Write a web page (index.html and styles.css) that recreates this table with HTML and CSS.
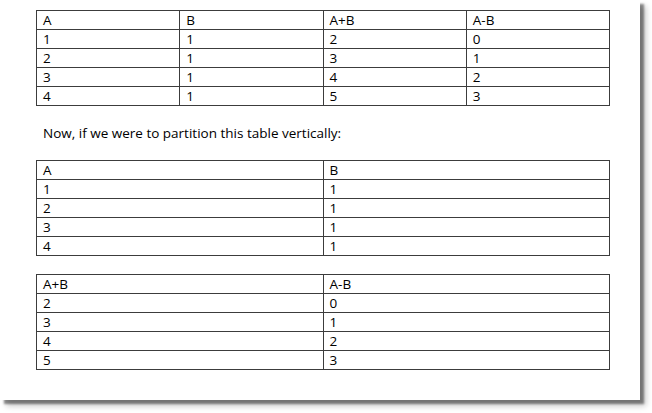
FILE: index.html
```html
<!DOCTYPE html>
<html>
<head>
<meta charset="utf-8">
<link rel="stylesheet" href="styles.css">
</head>
<body>
<div class="page">
  <table class="grid four">
    <tr><td>A</td><td>B</td><td>A+B</td><td>A-B</td></tr>
    <tr><td>1</td><td>1</td><td>2</td><td>0</td></tr>
    <tr><td>2</td><td>1</td><td>3</td><td>1</td></tr>
    <tr><td>3</td><td>1</td><td>4</td><td>2</td></tr>
    <tr><td>4</td><td>1</td><td>5</td><td>3</td></tr>
  </table>
  <p class="para">Now, if we were to partition this table vertically:</p>
  <table class="grid two">
    <tr><td>A</td><td>B</td></tr>
    <tr><td>1</td><td>1</td></tr>
    <tr><td>2</td><td>1</td></tr>
    <tr><td>3</td><td>1</td></tr>
    <tr><td>4</td><td>1</td></tr>
  </table>
  <table class="grid two second">
    <tr><td>A+B</td><td>A-B</td></tr>
    <tr><td>2</td><td>0</td></tr>
    <tr><td>3</td><td>1</td></tr>
    <tr><td>4</td><td>2</td></tr>
    <tr><td>5</td><td>3</td></tr>
  </table>
</div>
</body>
</html>
```
FILE: styles.css
```css
html, body {
  margin: 0;
  padding: 0;
  background: #ffffff;
}
body {
  font-family: "Open Sans", Lato, "Liberation Sans", sans-serif;
  font-size: 13.5px;
  color: #000;
  min-height: 413px;
  overflow: hidden;
}
.page {
  box-sizing: border-box;
  width: 640px;
  height: 400px;
  background: #fff;
  box-shadow: 4px 4px 2px rgba(0, 0, 0, 0.42), 6px 6px 6px rgba(0, 0, 0, 0.22);
  padding: 10px 0 0 36px;
  display: flex;
  flex-direction: column;
  align-items: flex-start;
}
.grid {
  border-collapse: collapse;
  width: 574px;
  table-layout: fixed;
}
.grid td {
  border: 1px solid #3c3c3c;
  height: 18px;
  padding: 0 0 0 6px;
  line-height: 17px;
  vertical-align: middle;
}
.para {
  margin: 18px 0 18px 7px;
  line-height: 18px;
}
.second {
  margin-top: 18px;
}
```
